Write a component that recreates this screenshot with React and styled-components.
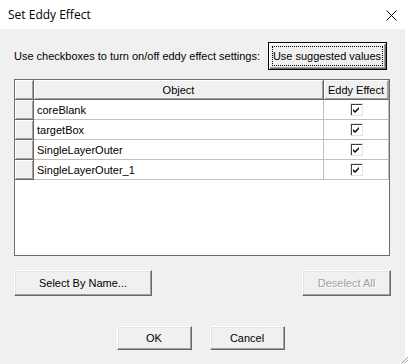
import React from "react";
import styled, { createGlobalStyle } from "styled-components";

const GlobalStyle = createGlobalStyle`
  html, body {
    margin: 0;
    padding: 0;
    background: #ffffff;
  }
`;

const rows = ["coreBlank", "targetBox", "SingleLayerOuter", "SingleLayerOuter_1"];

const App = () => {
  return (
    <Window>
      <GlobalStyle />
      <TitleBar>
        <span>Set Eddy Effect</span>
        <svg width="11" height="11" viewBox="0 0 11 11">
          <path d="M0.5 0.5 L10.5 10.5 M10.5 0.5 L0.5 10.5" stroke="#000" strokeWidth="1" />
        </svg>
      </TitleBar>
      <Body>
        <TopRow>
          <Label>Use checkboxes to turn on/off eddy effect settings:</Label>
          <Button $width={119} $height={28} $default>
            <Focus>Use suggested values</Focus>
          </Button>
        </TopRow>
        <Grid>
          <HeadCell />
          <HeadCell>Object</HeadCell>
          <HeadCell>Eddy Effect</HeadCell>
          {rows.map((name) => (
            <React.Fragment key={name}>
              <HeadCell />
              <Cell>{name}</Cell>
              <Cell $center>
                <Check>
                  <svg width="9" height="9" viewBox="0 0 9 9">
                    <path d="M1 3 L3 5 L7 1 L7 3 L3 7 L1 5 Z" fill="#000" />
                  </svg>
                </Check>
              </Cell>
            </React.Fragment>
          ))}
        </Grid>
        <ButtonRow>
          <Button $width={138} $height={26}>Select By Name...</Button>
          <Button $width={89} $height={26} $disabled>Deselect All</Button>
        </ButtonRow>
        <FooterRow>
          <Button $width={75} $height={24}>OK</Button>
          <Button $width={75} $height={24}>Cancel</Button>
        </FooterRow>
      </Body>
      <Grip>
        <svg width="10" height="10" viewBox="0 0 10 10">
          <path d="M9 3 L3 9 M9 6 L6 9" stroke="#a0a0a0" strokeWidth="1" />
        </svg>
      </Grip>
    </Window>
  );
};

export default App;

const Window = styled.div`
  position: relative;
  width: 409px;
  height: 364px;
  display: flex;
  flex-direction: column;
  background: #ffffff;
  font-family: "Liberation Sans", Arial, sans-serif;
  font-size: 11px;
  color: #000;
  overflow: hidden;
`;

const TitleBar = styled.div`
  height: 29px;
  flex-shrink: 0;
  display: flex;
  align-items: center;
  justify-content: space-between;
  padding: 0 12px 0 8px;
  font-family: "Open Sans", "Noto Sans", sans-serif;
  font-size: 12px;
  background: #ffffff;
  svg {
    margin-top: 1px;
  }
`;

const Body = styled.div`
  flex: 1;
  display: flex;
  flex-direction: column;
  background: #f0f0f0;
  padding: 0 18px 0 14px;
  margin-right: 4px;
`;

const TopRow = styled.div`
  margin-top: 13px;
  display: flex;
  align-items: center;
  justify-content: space-between;
`;

const Label = styled.span`
  white-space: nowrap;
`;

const Button = styled.div`
  box-sizing: border-box;
  width: ${(p) => p.$width}px;
  height: ${(p) => p.$height}px;
  display: flex;
  align-items: center;
  justify-content: center;
  background: #f0f0f0;
  color: ${(p) => (p.$disabled ? "#a0a0a0" : "#000")};
  white-space: nowrap;
  border: 1px solid;
  border-color: ${(p) =>
    p.$default ? "#000" : "#ffffff #696969 #696969 #ffffff"};
  box-shadow: ${(p) =>
    p.$default
      ? "inset 1px 1px 0 #ffffff, inset -1px -1px 0 #696969, inset -2px -2px 0 #a0a0a0"
      : "inset -1px -1px 0 #a0a0a0, inset 1px 1px 0 #e3e3e3"};
  text-shadow: ${(p) => (p.$disabled ? "1px 1px 0 #ffffff" : "none")};
`;

const Focus = styled.span`
  box-sizing: border-box;
  width: calc(100% - 6px);
  height: calc(100% - 6px);
  display: flex;
  align-items: center;
  justify-content: center;
  border: 1px dotted #000;
  margin-left: -1px;
  margin-top: -1px;
`;

const Grid = styled.div`
  margin-top: 9px;
  width: 376px;
  height: 177px;
  box-sizing: border-box;
  border: 1px solid #6d6d6d;
  background: #ffffff;
  display: grid;
  grid-template-columns: 19px 290px 65px;
  grid-auto-rows: 20px;
  align-content: start;
`;

const HeadCell = styled.div`
  box-sizing: border-box;
  display: flex;
  align-items: center;
  justify-content: center;
  background: #f0f0f0;
  border-right: 1px solid #696969;
  border-bottom: 1px solid #696969;
  box-shadow: inset 1px 1px 0 #ffffff, inset -1px -1px 0 #a0a0a0;
  white-space: nowrap;
  &:nth-child(3n) {
    border-right: 1px solid #a0a0a0;
  }
`;

const Cell = styled.div`
  box-sizing: border-box;
  display: flex;
  align-items: center;
  justify-content: ${(p) => (p.$center ? "center" : "flex-start")};
  padding-left: ${(p) => (p.$center ? "0" : "3px")};
  border-right: 1px solid #c0c0c0;
  border-bottom: 1px solid #c0c0c0;
  white-space: nowrap;
`;

const Check = styled.div`
  box-sizing: border-box;
  width: 13px;
  height: 13px;
  display: flex;
  align-items: center;
  justify-content: center;
  background: #ffffff;
  border: 1px solid;
  border-color: #808080 #ffffff #ffffff #808080;
  box-shadow: inset 1px 1px 0 #404040, 0 0 0 0 transparent;
  outline: 1px solid #e3e3e3;
  outline-offset: -1px;
  svg {
    margin: 1px 0 0 1px;
  }
`;

const ButtonRow = styled.div`
  margin-top: 14px;
  display: flex;
  justify-content: space-between;
  width: 377px;
`;

const FooterRow = styled.div`
  margin-top: 30px;
  display: flex;
  justify-content: center;
  gap: 18px;
`;

const Grip = styled.div`
  position: absolute;
  right: 0;
  bottom: 0;
  width: 10px;
  height: 10px;
  display: flex;
`;
